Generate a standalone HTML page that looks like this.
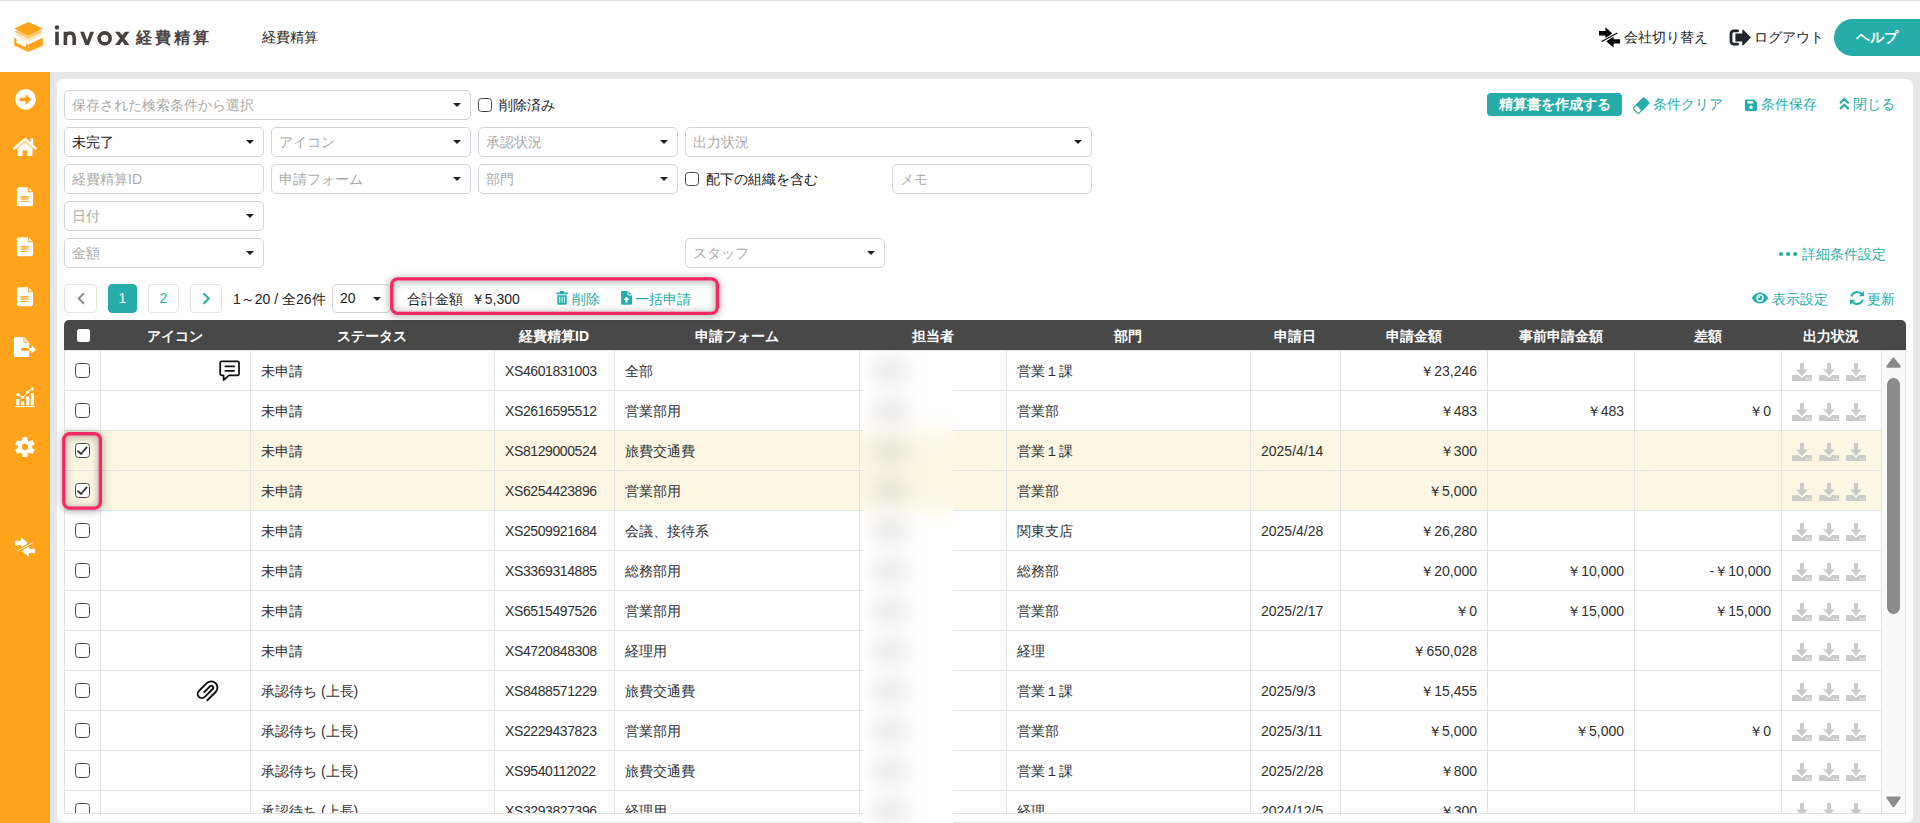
<!DOCTYPE html>
<html lang="ja">
<head>
<meta charset="utf-8">
<title>invox 経費精算</title>
<style>
*{box-sizing:border-box;margin:0;padding:0}
html,body{width:1920px;height:823px;overflow:hidden}
body{font-family:"Liberation Sans",sans-serif;font-size:14px;color:#222;background:#e8e8e8;position:relative}
.abs{position:absolute}
/* header */
#hdr{position:absolute;left:0;top:0;width:1920px;height:72px;background:#fff;border-top:1px solid #dfe1de}
#hdr .t{position:absolute;white-space:nowrap;color:#222;font-size:14px;line-height:20px}
#logo-jp{position:absolute;left:136px;top:25px;font-size:16px;font-weight:bold;letter-spacing:3px;color:#4a4543;line-height:24px;white-space:nowrap}
#help{position:absolute;left:1834px;top:18px;width:110px;height:37px;border-radius:18.5px;background:#26ada9;color:#fff;font-weight:bold;font-size:14px;line-height:37px;padding-left:22px}
/* sidebar */
#side{position:absolute;left:0;top:72px;width:50px;height:751px;background:#ffa31a}
#side svg{position:absolute}
/* panel */
#panel{position:absolute;left:57px;top:79px;width:1856px;height:743px;background:#fff;border-radius:6px}
.fld{position:absolute;height:30px;border:1px solid #ced4da;border-radius:5px;background:#fff;font-size:14px;line-height:28px;padding-left:7px;color:#aaa;white-space:nowrap}
.fld.v{color:#222}
.fld.sel:after{content:"";position:absolute;right:9px;top:12px;border-left:4px solid transparent;border-right:4px solid transparent;border-top:4px solid #222}
.cb{display:inline-block;width:15px;height:15px;border:1px solid #484848;border-radius:3.5px;background:#fff;position:relative;vertical-align:middle}
.cba{position:absolute;width:14px;height:14px;border:1px solid #484848;border-radius:3.5px;background:#fff}
.cb svg{position:absolute;left:-1px;top:-1px}
.lbl{position:absolute;white-space:nowrap;font-size:14px;line-height:20px;color:#222}
.teal{color:#26ada9}
.pg{position:absolute;top:284px;height:29px;border:1px solid #e4e4e4;border-radius:4px;background:#fff;text-align:center;line-height:27px;font-size:14px;color:#26ada9}
.pg.on{background:#26ada9;border-color:#26ada9;color:#fff}
/* table */
#thead{position:absolute;left:64px;top:320px;width:1842px;height:30px;background:#484848;border-radius:5px 5px 0 0}
#thead .th{position:absolute;top:0;height:30px;line-height:32px;text-align:center;color:#fff;font-weight:bold;font-size:14px;white-space:nowrap}
#tbody{position:absolute;left:0;top:0;width:1920px;height:814px;overflow:hidden}
.tr{position:absolute;left:64px;width:1818px;height:40px;border-bottom:1px solid #e3e3e3;border-left:1px solid #e3e3e3}
.tr.hl{background:#fdf6e3}
.td{position:absolute;top:0;height:39px;line-height:41px;border-right:1px solid #e3e3e3;padding:0 10px;white-space:nowrap;font-size:14px;color:#303030;overflow:hidden}
.td.r{text-align:right}
.c0{left:0;width:36px;padding:0;text-align:center;line-height:39px}
.c0 .cb{top:-1px}
.c3{letter-spacing:-.4px}
.c1{left:36px;width:150px}
.c2{left:186px;width:244px}
.c3{left:430px;width:120px}
.c4{left:550px;width:245px}
.c5{left:795px;width:147px}
.c6{left:942px;width:244px}
.c7{left:1186px;width:90px}
.c8{left:1276px;width:147px}
.c9{left:1423px;width:147px}
.c10{left:1570px;width:147px}
.c11{left:1717px;width:100px;padding:0}
.dl{fill:#cbcbcb;position:absolute;top:12px}
.dl:nth-child(1){left:10px}.dl:nth-child(2){left:37px}.dl:nth-child(3){left:64px}
.ic-comment{position:absolute;left:117px;top:10px}
.ic-clip{position:absolute;left:94px;top:8px}
#sb{position:absolute;left:1882px;top:350px;width:24px;height:464px;background:#fafafa;border-right:1px solid #e3e3e3;border-bottom:1px solid #e3e3e3}
#sb .thumb{position:absolute;left:5px;top:28px;width:13px;height:236px;border-radius:6.5px;background:#8b8b8b}
#sb .up{position:absolute;left:5px;top:8px;border-left:7px solid transparent;border-right:7px solid transparent;border-bottom:9px solid #8a8a8a}
#sb .dn{position:absolute;left:5px;top:446px;border-left:7px solid transparent;border-right:7px solid transparent;border-top:9px solid #8a8a8a}
.pink{position:absolute;border:3px solid #f5306f;border-radius:7px;filter:drop-shadow(0 2px 3px rgba(0,0,0,.45))}
#blur{position:absolute;left:863px;top:351px;width:90px;height:472px;overflow:hidden;background:#fff;z-index:5}
#blur .in{position:absolute;left:-30px;top:-30px;width:150px;height:532px;background:#fff;filter:blur(11px)}
#blur .in b{position:absolute;left:0;width:150px;display:block}
#blur .in i{position:absolute;left:42px;width:30px;height:10px;background:#c2c2c2;display:block;border-radius:3px}
</style>
</head>
<body>
<div id="hdr">
  
  <div id="logo-jp">経費精算</div>
  <div class="t" style="left:262px;top:26px">経費精算</div>
  <div class="t" style="left:1624px;top:26px">会社切り替え</div>
  <div class="t" style="left:1754px;top:26px">ログアウト</div>
  <div id="help">ヘルプ</div>
</div>
<div id="side">
  
</div>
<div id="panel"></div>
<div class="abs" style="left:50px;top:72px;width:1px;height:751px;background:#e4ebf3"></div>

<!-- filters -->
<div class="fld sel" style="left:64px;top:90px;width:407px">保存された検索条件から選択</div>
<span class="cba" style="left:478px;top:98px"></span><div class="lbl" style="left:499px;top:95px">削除済み</div>

<div class="fld sel v" style="left:64px;top:127px;width:200px">未完了</div>
<div class="fld sel" style="left:271px;top:127px;width:200px">アイコン</div>
<div class="fld sel" style="left:478px;top:127px;width:200px">承認状況</div>
<div class="fld sel" style="left:685px;top:127px;width:407px">出力状況</div>

<div class="fld" style="left:64px;top:164px;width:200px">経費精算ID</div>
<div class="fld sel" style="left:271px;top:164px;width:200px">申請フォーム</div>
<div class="fld sel" style="left:478px;top:164px;width:200px">部門</div>
<span class="cba" style="left:685px;top:172px"></span><div class="lbl" style="left:706px;top:169px">配下の組織を含む</div>
<div class="fld" style="left:892px;top:164px;width:200px">メモ</div>

<div class="fld sel" style="left:64px;top:201px;width:200px">日付</div>
<div class="fld sel" style="left:64px;top:238px;width:200px">金額</div>
<div class="fld sel" style="left:685px;top:238px;width:200px">スタッフ</div>

<!-- top-right actions -->
<div class="abs" style="left:1487px;top:93px;width:135px;height:23px;border-radius:4px;background:#26ada9;color:#fff;font-weight:bold;font-size:14px;line-height:23px;text-align:center;white-space:nowrap">精算書を作成する</div>
<div class="lbl teal" style="left:1653px;top:94px">条件クリア</div>
<div class="lbl teal" style="left:1761px;top:94px">条件保存</div>
<div class="lbl teal" style="left:1853px;top:94px">閉じる</div>
<div class="lbl teal" style="left:1802px;top:244px">詳細条件設定</div>
<div class="lbl teal" style="left:1772px;top:289px">表示設定</div>
<div class="lbl teal" style="left:1867px;top:289px">更新</div>

<!-- pagination -->
<div class="pg" style="left:64px;width:33px"></div>
<div class="pg on" style="left:108px;width:29px">1</div>
<div class="pg" style="left:148px;width:31px">2</div>
<div class="pg" style="left:190px;width:32px"></div>
<div class="lbl" style="left:233px;top:289px">1～20 / 全26件</div>
<div class="fld sel v" style="left:332px;top:284px;width:59px;height:29px;line-height:27px">20</div>
<div class="lbl" style="left:407px;top:289px">合計金額&nbsp;&nbsp;￥5,300</div>
<div class="lbl teal" style="left:572px;top:289px">削除</div>
<div class="lbl teal" style="left:635px;top:289px">一括申請</div>

<!-- table -->
<div id="thead">
  <span class="abs" style="left:13px;top:9px;width:13px;height:13px;background:#fff;border-radius:2.5px"></span>
  <div class="th" style="left:36px;width:150px">アイコン</div>
  <div class="th" style="left:186px;width:244px">ステータス</div>
  <div class="th" style="left:430px;width:120px">経費精算ID</div>
  <div class="th" style="left:550px;width:245px">申請フォーム</div>
  <div class="th" style="left:795px;width:147px">担当者</div>
  <div class="th" style="left:942px;width:244px">部門</div>
  <div class="th" style="left:1186px;width:90px">申請日</div>
  <div class="th" style="left:1276px;width:147px">申請金額</div>
  <div class="th" style="left:1423px;width:147px">事前申請金額</div>
  <div class="th" style="left:1570px;width:147px">差額</div>
  <div class="th" style="left:1717px;width:100px">出力状況</div>
</div>
<div id="tbody">
<div class="tr" style="top:351px">
<div class="td c0"><span class="cb"></span></div><div class="td c1"></div><div class="td c2">未申請</div><div class="td c3">XS4601831003</div><div class="td c4">全部</div><div class="td c5"></div><div class="td c6">営業１課</div><div class="td c7"></div><div class="td c8 r">￥23,246</div><div class="td c9 r"></div><div class="td c10 r"></div><div class="td c11"><svg class="dl" viewBox="0 0 20 18" width="20" height="18"><path d="M8 0h4v6.400h3.900L10 13.100 4.100 6.400H8z"/><path d="M1 12h5.600l3.400 3 3.400-3H19a1 1 0 0 1 1 1v4a1 1 0 0 1-1 1H1a1 1 0 0 1-1-1v-4a1 1 0 0 1 1-1z M14.200 15.300v1.500h1.300v-1.500z M17.200 15.300v1.500h1.300v-1.500z" fill-rule="evenodd"/></svg><svg class="dl" viewBox="0 0 20 18" width="20" height="18"><path d="M8 0h4v6.400h3.900L10 13.100 4.100 6.400H8z"/><path d="M1 12h5.600l3.400 3 3.400-3H19a1 1 0 0 1 1 1v4a1 1 0 0 1-1 1H1a1 1 0 0 1-1-1v-4a1 1 0 0 1 1-1z M14.200 15.300v1.500h1.300v-1.500z M17.200 15.300v1.500h1.300v-1.500z" fill-rule="evenodd"/></svg><svg class="dl" viewBox="0 0 20 18" width="20" height="18"><path d="M8 0h4v6.400h3.900L10 13.100 4.100 6.400H8z"/><path d="M1 12h5.600l3.400 3 3.400-3H19a1 1 0 0 1 1 1v4a1 1 0 0 1-1 1H1a1 1 0 0 1-1-1v-4a1 1 0 0 1 1-1z M14.200 15.300v1.500h1.300v-1.500z M17.200 15.300v1.500h1.300v-1.500z" fill-rule="evenodd"/></svg></div>
</div>
<div class="tr" style="top:391px">
<div class="td c0"><span class="cb"></span></div><div class="td c1"></div><div class="td c2">未申請</div><div class="td c3">XS2616595512</div><div class="td c4">営業部用</div><div class="td c5"></div><div class="td c6">営業部</div><div class="td c7"></div><div class="td c8 r">￥483</div><div class="td c9 r">￥483</div><div class="td c10 r">￥0</div><div class="td c11"><svg class="dl" viewBox="0 0 20 18" width="20" height="18"><path d="M8 0h4v6.400h3.900L10 13.100 4.100 6.400H8z"/><path d="M1 12h5.600l3.400 3 3.400-3H19a1 1 0 0 1 1 1v4a1 1 0 0 1-1 1H1a1 1 0 0 1-1-1v-4a1 1 0 0 1 1-1z M14.200 15.300v1.500h1.300v-1.500z M17.200 15.300v1.500h1.300v-1.500z" fill-rule="evenodd"/></svg><svg class="dl" viewBox="0 0 20 18" width="20" height="18"><path d="M8 0h4v6.400h3.900L10 13.100 4.100 6.400H8z"/><path d="M1 12h5.600l3.400 3 3.400-3H19a1 1 0 0 1 1 1v4a1 1 0 0 1-1 1H1a1 1 0 0 1-1-1v-4a1 1 0 0 1 1-1z M14.200 15.300v1.500h1.300v-1.500z M17.200 15.300v1.500h1.300v-1.500z" fill-rule="evenodd"/></svg><svg class="dl" viewBox="0 0 20 18" width="20" height="18"><path d="M8 0h4v6.400h3.900L10 13.100 4.100 6.400H8z"/><path d="M1 12h5.600l3.400 3 3.400-3H19a1 1 0 0 1 1 1v4a1 1 0 0 1-1 1H1a1 1 0 0 1-1-1v-4a1 1 0 0 1 1-1z M14.200 15.300v1.500h1.300v-1.500z M17.200 15.300v1.500h1.300v-1.500z" fill-rule="evenodd"/></svg></div>
</div>
<div class="tr hl" style="top:431px">
<div class="td c0"><span class="cb on"><svg viewBox="0 0 15 15" width="15" height="15"><path d="M2.4 7.7L6 11L12.1 3.9" fill="none" stroke="#333" stroke-width="1.8"/></svg></span></div><div class="td c1"></div><div class="td c2">未申請</div><div class="td c3">XS8129000524</div><div class="td c4">旅費交通費</div><div class="td c5"></div><div class="td c6">営業１課</div><div class="td c7">2025/4/14</div><div class="td c8 r">￥300</div><div class="td c9 r"></div><div class="td c10 r"></div><div class="td c11"><svg class="dl" viewBox="0 0 20 18" width="20" height="18"><path d="M8 0h4v6.400h3.900L10 13.100 4.100 6.400H8z"/><path d="M1 12h5.600l3.400 3 3.400-3H19a1 1 0 0 1 1 1v4a1 1 0 0 1-1 1H1a1 1 0 0 1-1-1v-4a1 1 0 0 1 1-1z M14.200 15.300v1.500h1.300v-1.500z M17.200 15.300v1.500h1.300v-1.500z" fill-rule="evenodd"/></svg><svg class="dl" viewBox="0 0 20 18" width="20" height="18"><path d="M8 0h4v6.400h3.900L10 13.100 4.100 6.400H8z"/><path d="M1 12h5.600l3.400 3 3.400-3H19a1 1 0 0 1 1 1v4a1 1 0 0 1-1 1H1a1 1 0 0 1-1-1v-4a1 1 0 0 1 1-1z M14.200 15.300v1.500h1.300v-1.500z M17.200 15.300v1.500h1.300v-1.500z" fill-rule="evenodd"/></svg><svg class="dl" viewBox="0 0 20 18" width="20" height="18"><path d="M8 0h4v6.400h3.900L10 13.100 4.100 6.400H8z"/><path d="M1 12h5.600l3.400 3 3.400-3H19a1 1 0 0 1 1 1v4a1 1 0 0 1-1 1H1a1 1 0 0 1-1-1v-4a1 1 0 0 1 1-1z M14.200 15.300v1.500h1.300v-1.500z M17.200 15.300v1.500h1.300v-1.500z" fill-rule="evenodd"/></svg></div>
</div>
<div class="tr hl" style="top:471px">
<div class="td c0"><span class="cb on"><svg viewBox="0 0 15 15" width="15" height="15"><path d="M2.4 7.7L6 11L12.1 3.9" fill="none" stroke="#333" stroke-width="1.8"/></svg></span></div><div class="td c1"></div><div class="td c2">未申請</div><div class="td c3">XS6254423896</div><div class="td c4">営業部用</div><div class="td c5"></div><div class="td c6">営業部</div><div class="td c7"></div><div class="td c8 r">￥5,000</div><div class="td c9 r"></div><div class="td c10 r"></div><div class="td c11"><svg class="dl" viewBox="0 0 20 18" width="20" height="18"><path d="M8 0h4v6.400h3.900L10 13.100 4.100 6.400H8z"/><path d="M1 12h5.600l3.400 3 3.400-3H19a1 1 0 0 1 1 1v4a1 1 0 0 1-1 1H1a1 1 0 0 1-1-1v-4a1 1 0 0 1 1-1z M14.200 15.300v1.500h1.300v-1.500z M17.200 15.300v1.500h1.300v-1.500z" fill-rule="evenodd"/></svg><svg class="dl" viewBox="0 0 20 18" width="20" height="18"><path d="M8 0h4v6.400h3.900L10 13.100 4.100 6.400H8z"/><path d="M1 12h5.600l3.400 3 3.400-3H19a1 1 0 0 1 1 1v4a1 1 0 0 1-1 1H1a1 1 0 0 1-1-1v-4a1 1 0 0 1 1-1z M14.200 15.300v1.500h1.300v-1.500z M17.200 15.300v1.500h1.300v-1.500z" fill-rule="evenodd"/></svg><svg class="dl" viewBox="0 0 20 18" width="20" height="18"><path d="M8 0h4v6.400h3.900L10 13.100 4.100 6.400H8z"/><path d="M1 12h5.600l3.400 3 3.400-3H19a1 1 0 0 1 1 1v4a1 1 0 0 1-1 1H1a1 1 0 0 1-1-1v-4a1 1 0 0 1 1-1z M14.200 15.300v1.500h1.300v-1.500z M17.200 15.300v1.500h1.300v-1.500z" fill-rule="evenodd"/></svg></div>
</div>
<div class="tr" style="top:511px">
<div class="td c0"><span class="cb"></span></div><div class="td c1"></div><div class="td c2">未申請</div><div class="td c3">XS2509921684</div><div class="td c4">会議、接待系</div><div class="td c5"></div><div class="td c6">関東支店</div><div class="td c7">2025/4/28</div><div class="td c8 r">￥26,280</div><div class="td c9 r"></div><div class="td c10 r"></div><div class="td c11"><svg class="dl" viewBox="0 0 20 18" width="20" height="18"><path d="M8 0h4v6.400h3.900L10 13.100 4.100 6.400H8z"/><path d="M1 12h5.600l3.400 3 3.400-3H19a1 1 0 0 1 1 1v4a1 1 0 0 1-1 1H1a1 1 0 0 1-1-1v-4a1 1 0 0 1 1-1z M14.200 15.300v1.500h1.300v-1.500z M17.200 15.300v1.500h1.300v-1.500z" fill-rule="evenodd"/></svg><svg class="dl" viewBox="0 0 20 18" width="20" height="18"><path d="M8 0h4v6.400h3.900L10 13.100 4.100 6.400H8z"/><path d="M1 12h5.600l3.400 3 3.400-3H19a1 1 0 0 1 1 1v4a1 1 0 0 1-1 1H1a1 1 0 0 1-1-1v-4a1 1 0 0 1 1-1z M14.200 15.300v1.500h1.300v-1.500z M17.200 15.300v1.500h1.300v-1.500z" fill-rule="evenodd"/></svg><svg class="dl" viewBox="0 0 20 18" width="20" height="18"><path d="M8 0h4v6.400h3.900L10 13.100 4.100 6.400H8z"/><path d="M1 12h5.600l3.400 3 3.400-3H19a1 1 0 0 1 1 1v4a1 1 0 0 1-1 1H1a1 1 0 0 1-1-1v-4a1 1 0 0 1 1-1z M14.200 15.300v1.500h1.300v-1.500z M17.200 15.300v1.500h1.300v-1.500z" fill-rule="evenodd"/></svg></div>
</div>
<div class="tr" style="top:551px">
<div class="td c0"><span class="cb"></span></div><div class="td c1"></div><div class="td c2">未申請</div><div class="td c3">XS3369314885</div><div class="td c4">総務部用</div><div class="td c5"></div><div class="td c6">総務部</div><div class="td c7"></div><div class="td c8 r">￥20,000</div><div class="td c9 r">￥10,000</div><div class="td c10 r">-￥10,000</div><div class="td c11"><svg class="dl" viewBox="0 0 20 18" width="20" height="18"><path d="M8 0h4v6.400h3.900L10 13.100 4.100 6.400H8z"/><path d="M1 12h5.600l3.400 3 3.400-3H19a1 1 0 0 1 1 1v4a1 1 0 0 1-1 1H1a1 1 0 0 1-1-1v-4a1 1 0 0 1 1-1z M14.200 15.300v1.500h1.300v-1.500z M17.200 15.300v1.500h1.300v-1.500z" fill-rule="evenodd"/></svg><svg class="dl" viewBox="0 0 20 18" width="20" height="18"><path d="M8 0h4v6.400h3.900L10 13.100 4.100 6.400H8z"/><path d="M1 12h5.600l3.400 3 3.400-3H19a1 1 0 0 1 1 1v4a1 1 0 0 1-1 1H1a1 1 0 0 1-1-1v-4a1 1 0 0 1 1-1z M14.200 15.300v1.500h1.300v-1.500z M17.200 15.300v1.500h1.300v-1.500z" fill-rule="evenodd"/></svg><svg class="dl" viewBox="0 0 20 18" width="20" height="18"><path d="M8 0h4v6.400h3.900L10 13.100 4.100 6.400H8z"/><path d="M1 12h5.600l3.400 3 3.400-3H19a1 1 0 0 1 1 1v4a1 1 0 0 1-1 1H1a1 1 0 0 1-1-1v-4a1 1 0 0 1 1-1z M14.200 15.300v1.500h1.300v-1.500z M17.200 15.300v1.500h1.300v-1.500z" fill-rule="evenodd"/></svg></div>
</div>
<div class="tr" style="top:591px">
<div class="td c0"><span class="cb"></span></div><div class="td c1"></div><div class="td c2">未申請</div><div class="td c3">XS6515497526</div><div class="td c4">営業部用</div><div class="td c5"></div><div class="td c6">営業部</div><div class="td c7">2025/2/17</div><div class="td c8 r">￥0</div><div class="td c9 r">￥15,000</div><div class="td c10 r">￥15,000</div><div class="td c11"><svg class="dl" viewBox="0 0 20 18" width="20" height="18"><path d="M8 0h4v6.400h3.900L10 13.100 4.100 6.400H8z"/><path d="M1 12h5.600l3.400 3 3.400-3H19a1 1 0 0 1 1 1v4a1 1 0 0 1-1 1H1a1 1 0 0 1-1-1v-4a1 1 0 0 1 1-1z M14.200 15.300v1.500h1.300v-1.500z M17.200 15.300v1.500h1.300v-1.500z" fill-rule="evenodd"/></svg><svg class="dl" viewBox="0 0 20 18" width="20" height="18"><path d="M8 0h4v6.400h3.900L10 13.100 4.100 6.400H8z"/><path d="M1 12h5.600l3.400 3 3.400-3H19a1 1 0 0 1 1 1v4a1 1 0 0 1-1 1H1a1 1 0 0 1-1-1v-4a1 1 0 0 1 1-1z M14.200 15.300v1.500h1.300v-1.500z M17.200 15.300v1.500h1.300v-1.500z" fill-rule="evenodd"/></svg><svg class="dl" viewBox="0 0 20 18" width="20" height="18"><path d="M8 0h4v6.400h3.900L10 13.100 4.100 6.400H8z"/><path d="M1 12h5.600l3.400 3 3.400-3H19a1 1 0 0 1 1 1v4a1 1 0 0 1-1 1H1a1 1 0 0 1-1-1v-4a1 1 0 0 1 1-1z M14.200 15.300v1.500h1.300v-1.500z M17.200 15.300v1.500h1.300v-1.500z" fill-rule="evenodd"/></svg></div>
</div>
<div class="tr" style="top:631px">
<div class="td c0"><span class="cb"></span></div><div class="td c1"></div><div class="td c2">未申請</div><div class="td c3">XS4720848308</div><div class="td c4">経理用</div><div class="td c5"></div><div class="td c6">経理</div><div class="td c7"></div><div class="td c8 r">￥650,028</div><div class="td c9 r"></div><div class="td c10 r"></div><div class="td c11"><svg class="dl" viewBox="0 0 20 18" width="20" height="18"><path d="M8 0h4v6.400h3.900L10 13.100 4.100 6.400H8z"/><path d="M1 12h5.600l3.400 3 3.400-3H19a1 1 0 0 1 1 1v4a1 1 0 0 1-1 1H1a1 1 0 0 1-1-1v-4a1 1 0 0 1 1-1z M14.200 15.300v1.500h1.300v-1.500z M17.200 15.300v1.500h1.300v-1.500z" fill-rule="evenodd"/></svg><svg class="dl" viewBox="0 0 20 18" width="20" height="18"><path d="M8 0h4v6.400h3.900L10 13.100 4.100 6.400H8z"/><path d="M1 12h5.600l3.400 3 3.400-3H19a1 1 0 0 1 1 1v4a1 1 0 0 1-1 1H1a1 1 0 0 1-1-1v-4a1 1 0 0 1 1-1z M14.200 15.300v1.500h1.300v-1.500z M17.200 15.300v1.500h1.300v-1.500z" fill-rule="evenodd"/></svg><svg class="dl" viewBox="0 0 20 18" width="20" height="18"><path d="M8 0h4v6.400h3.900L10 13.100 4.100 6.400H8z"/><path d="M1 12h5.600l3.400 3 3.400-3H19a1 1 0 0 1 1 1v4a1 1 0 0 1-1 1H1a1 1 0 0 1-1-1v-4a1 1 0 0 1 1-1z M14.200 15.300v1.500h1.300v-1.500z M17.200 15.300v1.500h1.300v-1.500z" fill-rule="evenodd"/></svg></div>
</div>
<div class="tr" style="top:671px">
<div class="td c0"><span class="cb"></span></div><div class="td c1"></div><div class="td c2">承認待ち (上長)</div><div class="td c3">XS8488571229</div><div class="td c4">旅費交通費</div><div class="td c5"></div><div class="td c6">営業１課</div><div class="td c7">2025/9/3</div><div class="td c8 r">￥15,455</div><div class="td c9 r"></div><div class="td c10 r"></div><div class="td c11"><svg class="dl" viewBox="0 0 20 18" width="20" height="18"><path d="M8 0h4v6.400h3.900L10 13.100 4.100 6.400H8z"/><path d="M1 12h5.600l3.400 3 3.400-3H19a1 1 0 0 1 1 1v4a1 1 0 0 1-1 1H1a1 1 0 0 1-1-1v-4a1 1 0 0 1 1-1z M14.200 15.300v1.500h1.300v-1.500z M17.200 15.300v1.500h1.300v-1.500z" fill-rule="evenodd"/></svg><svg class="dl" viewBox="0 0 20 18" width="20" height="18"><path d="M8 0h4v6.400h3.900L10 13.100 4.100 6.400H8z"/><path d="M1 12h5.600l3.400 3 3.400-3H19a1 1 0 0 1 1 1v4a1 1 0 0 1-1 1H1a1 1 0 0 1-1-1v-4a1 1 0 0 1 1-1z M14.200 15.300v1.500h1.300v-1.500z M17.200 15.300v1.500h1.300v-1.500z" fill-rule="evenodd"/></svg><svg class="dl" viewBox="0 0 20 18" width="20" height="18"><path d="M8 0h4v6.400h3.900L10 13.100 4.100 6.400H8z"/><path d="M1 12h5.600l3.400 3 3.400-3H19a1 1 0 0 1 1 1v4a1 1 0 0 1-1 1H1a1 1 0 0 1-1-1v-4a1 1 0 0 1 1-1z M14.200 15.300v1.500h1.300v-1.500z M17.200 15.300v1.500h1.300v-1.500z" fill-rule="evenodd"/></svg></div>
</div>
<div class="tr" style="top:711px">
<div class="td c0"><span class="cb"></span></div><div class="td c1"></div><div class="td c2">承認待ち (上長)</div><div class="td c3">XS2229437823</div><div class="td c4">営業部用</div><div class="td c5"></div><div class="td c6">営業部</div><div class="td c7">2025/3/11</div><div class="td c8 r">￥5,000</div><div class="td c9 r">￥5,000</div><div class="td c10 r">￥0</div><div class="td c11"><svg class="dl" viewBox="0 0 20 18" width="20" height="18"><path d="M8 0h4v6.400h3.900L10 13.100 4.100 6.400H8z"/><path d="M1 12h5.600l3.400 3 3.400-3H19a1 1 0 0 1 1 1v4a1 1 0 0 1-1 1H1a1 1 0 0 1-1-1v-4a1 1 0 0 1 1-1z M14.200 15.300v1.500h1.300v-1.500z M17.200 15.300v1.500h1.300v-1.500z" fill-rule="evenodd"/></svg><svg class="dl" viewBox="0 0 20 18" width="20" height="18"><path d="M8 0h4v6.400h3.900L10 13.100 4.100 6.400H8z"/><path d="M1 12h5.600l3.400 3 3.400-3H19a1 1 0 0 1 1 1v4a1 1 0 0 1-1 1H1a1 1 0 0 1-1-1v-4a1 1 0 0 1 1-1z M14.200 15.300v1.500h1.300v-1.500z M17.200 15.300v1.500h1.300v-1.500z" fill-rule="evenodd"/></svg><svg class="dl" viewBox="0 0 20 18" width="20" height="18"><path d="M8 0h4v6.400h3.900L10 13.100 4.100 6.400H8z"/><path d="M1 12h5.600l3.400 3 3.400-3H19a1 1 0 0 1 1 1v4a1 1 0 0 1-1 1H1a1 1 0 0 1-1-1v-4a1 1 0 0 1 1-1z M14.200 15.300v1.500h1.300v-1.500z M17.200 15.300v1.500h1.300v-1.500z" fill-rule="evenodd"/></svg></div>
</div>
<div class="tr" style="top:751px">
<div class="td c0"><span class="cb"></span></div><div class="td c1"></div><div class="td c2">承認待ち (上長)</div><div class="td c3">XS9540112022</div><div class="td c4">旅費交通費</div><div class="td c5"></div><div class="td c6">営業１課</div><div class="td c7">2025/2/28</div><div class="td c8 r">￥800</div><div class="td c9 r"></div><div class="td c10 r"></div><div class="td c11"><svg class="dl" viewBox="0 0 20 18" width="20" height="18"><path d="M8 0h4v6.400h3.900L10 13.100 4.100 6.400H8z"/><path d="M1 12h5.600l3.400 3 3.400-3H19a1 1 0 0 1 1 1v4a1 1 0 0 1-1 1H1a1 1 0 0 1-1-1v-4a1 1 0 0 1 1-1z M14.200 15.300v1.500h1.300v-1.500z M17.200 15.300v1.500h1.300v-1.500z" fill-rule="evenodd"/></svg><svg class="dl" viewBox="0 0 20 18" width="20" height="18"><path d="M8 0h4v6.400h3.900L10 13.100 4.100 6.400H8z"/><path d="M1 12h5.600l3.400 3 3.400-3H19a1 1 0 0 1 1 1v4a1 1 0 0 1-1 1H1a1 1 0 0 1-1-1v-4a1 1 0 0 1 1-1z M14.200 15.300v1.500h1.300v-1.500z M17.200 15.300v1.500h1.300v-1.500z" fill-rule="evenodd"/></svg><svg class="dl" viewBox="0 0 20 18" width="20" height="18"><path d="M8 0h4v6.400h3.900L10 13.100 4.100 6.400H8z"/><path d="M1 12h5.600l3.400 3 3.400-3H19a1 1 0 0 1 1 1v4a1 1 0 0 1-1 1H1a1 1 0 0 1-1-1v-4a1 1 0 0 1 1-1z M14.200 15.300v1.500h1.300v-1.500z M17.200 15.300v1.500h1.300v-1.500z" fill-rule="evenodd"/></svg></div>
</div>
<div class="tr" style="top:791px">
<div class="td c0"><span class="cb"></span></div><div class="td c1"></div><div class="td c2">承認待ち (上長)</div><div class="td c3">XS3293827396</div><div class="td c4">経理用</div><div class="td c5"></div><div class="td c6">経理</div><div class="td c7">2024/12/5</div><div class="td c8 r">￥300</div><div class="td c9 r"></div><div class="td c10 r"></div><div class="td c11"><svg class="dl" viewBox="0 0 20 18" width="20" height="18"><path d="M8 0h4v6.400h3.900L10 13.100 4.100 6.400H8z"/><path d="M1 12h5.600l3.400 3 3.400-3H19a1 1 0 0 1 1 1v4a1 1 0 0 1-1 1H1a1 1 0 0 1-1-1v-4a1 1 0 0 1 1-1z M14.200 15.300v1.500h1.300v-1.500z M17.200 15.300v1.500h1.300v-1.500z" fill-rule="evenodd"/></svg><svg class="dl" viewBox="0 0 20 18" width="20" height="18"><path d="M8 0h4v6.400h3.900L10 13.100 4.100 6.400H8z"/><path d="M1 12h5.600l3.400 3 3.400-3H19a1 1 0 0 1 1 1v4a1 1 0 0 1-1 1H1a1 1 0 0 1-1-1v-4a1 1 0 0 1 1-1z M14.200 15.300v1.500h1.300v-1.500z M17.200 15.300v1.500h1.300v-1.500z" fill-rule="evenodd"/></svg><svg class="dl" viewBox="0 0 20 18" width="20" height="18"><path d="M8 0h4v6.400h3.900L10 13.100 4.100 6.400H8z"/><path d="M1 12h5.600l3.400 3 3.400-3H19a1 1 0 0 1 1 1v4a1 1 0 0 1-1 1H1a1 1 0 0 1-1-1v-4a1 1 0 0 1 1-1z M14.200 15.300v1.500h1.300v-1.500z M17.200 15.300v1.500h1.300v-1.500z" fill-rule="evenodd"/></svg></div>
</div>
</div>
<div id="sb"><div class="thumb"></div></div>
<div id="blur"><div class="in"><b style="top:110px;height:80px;background:#fdf6e3"></b><i style="top:45px"></i><i style="top:85px"></i><i style="top:125px"></i><i style="top:165px"></i><i style="top:205px"></i><i style="top:245px"></i><i style="top:285px"></i><i style="top:325px"></i><i style="top:365px"></i><i style="top:405px"></i><i style="top:445px"></i><i style="top:485px"></i></div></div>
<div class="abs" style="left:64px;top:813px;width:1842px;height:1px;background:#e3e3e3"></div>
<div class="abs" style="left:64px;top:350px;width:1842px;height:1px;background:#e3e3e3"></div>

<svg class="abs" style="left:0;top:0;pointer-events:none" width="1920" height="823" viewBox="0 0 1920 823">
<!-- logo mark -->
<g>
<polygon points="14.2,34.6 28.3,28 42.9,34.6 28.3,41.4" fill="#ffe6c2"/>
<polygon points="14.2,31.7 28.3,25 42.9,31.7 28.3,38.7" fill="#ffc978"/>
<polygon points="14.2,28.5 28.3,22 42.9,28.5 28.3,35.6" fill="#ffa31a"/>
<polygon points="42.9,37.7 28.3,44.4 28.3,51.9 42.9,45.5" fill="#ffa31a"/>
<path d="M14.2 37.7 L16.4 38.8 V42.7 L25.9 47.2 V43.3 L28.3 44.4 V51.9 L14.2 45.5z" fill="#ffa31a"/>
</g>
<!-- invox wordmark -->
<g fill="none" stroke="#453f3d" stroke-width="3.6">
<circle cx="57" cy="27.5" r="2.2" fill="#453f3d" stroke="none"/>
<path d="M57 31.7V45.1"/>
<path d="M65.4 31.7V45.1M65.4 38.2c0-3.4 1.9-5.2 4.5-5.2s4.3 1.7 4.3 5.2V45.1"/>
<polygon points="80.100,31.700 84,31.700 87.100,40.200 90.200,31.700 94,31.700 88.900,45.100 85.300,45.100" fill="#453f3d" stroke="none"/>
<circle cx="104.65" cy="38.4" r="5.5"/>
<polygon points="115.06,31.7 119.53,31.7 129.44,45.1 124.97,45.1" fill="#453f3d" stroke="none"/><polygon points="124.97,31.7 129.44,31.7 119.53,45.1 115.06,45.1" fill="#453f3d" stroke="none"/>
</g>
<!-- header: switch icon (black) -->
<g transform="translate(1599,27.2)">
<path d="M0 3.9h6.4V0l6.8 6.1-6.8 5.9V8.3H0z" fill="#000"/>
<path d="M21 12h-6.4V8.5L7.4 14.4l7.2 5.9v-3.9H21z" fill="#000"/>
<path d="M1.200 15.050L19.800 5.150" stroke="#fff" stroke-width="3.100"/>
<path d="M2.6 14.3L18.4 5.9" stroke="#000" stroke-width="1.1"/>
</g>
<!-- header: logout icon -->
<g transform="translate(1729.6,29.5)">
<path d="M8 1.4H4.2a2.8 2.8 0 0 0-2.8 2.8v7.6a2.8 2.8 0 0 0 2.8 2.8H8" fill="none" stroke="#212529" stroke-width="2.8" stroke-linecap="round"/>
<path d="M5.800 4h6.900V.6c0-.6.600-.800 1-.400l7.200 7.200c.300.300.300.900 0 1.200l-7.200 7.200c-.400.400-1 .200-1-.400V12H5.800z" fill="#212529"/>
</g>
<!-- sidebar icons (white on orange) -->
<g fill="#fff">
<!-- arrow circle -->
<circle cx="25.5" cy="99.4" r="10.4"/>
<path d="M20 97.800h5.600V94.400l5.700 5-5.700 5.300v-3.500H20z" fill="#ffa31a"/>
<!-- home -->
<path d="M14.600 148.300L25 139.200l10.400 9.100" fill="none" stroke="#fff" stroke-width="2.600" stroke-linecap="round" stroke-linejoin="round"/>
<rect x="30.400" y="138.300" width="2.700" height="6"/>
<path d="M17.500 148.600L25 142.100l7.500 6.500V155a1 1 0 0 1-1 1H27.400V150.600H22.600V156H18.500a1 1 0 0 1-1-1z"/>
<!-- doc x3 -->
<g><path d="M18.9 187.2h9.6l4.5 4.5v12.6a2 2 0 0 1-2 2H18.9a2 2 0 0 1-2-2v-15.1a2 2 0 0 1 2-2z"/>
<path d="M28.4 187.2v4.6h4.6" fill="none" stroke="#ffa31a" stroke-width="1"/>
<rect x="20.6" y="196.7" width="8" height="2.4" fill="#ffd08a"/>
<path d="M20.4 196.65h8.7M20.4 199.1h7.800M20.4 201.4h8.7" fill="none" stroke="#ffa31a" stroke-width=".9"/>
</g>
<g transform="translate(0,50)"><path d="M18.9 187.2h9.6l4.5 4.5v12.6a2 2 0 0 1-2 2H18.9a2 2 0 0 1-2-2v-15.1a2 2 0 0 1 2-2z"/>
<path d="M28.4 187.2v4.6h4.6" fill="none" stroke="#ffa31a" stroke-width="1"/>
<rect x="20.6" y="196.7" width="8" height="2.4" fill="#ffd08a"/>
<path d="M20.4 196.65h8.7M20.4 199.1h7.800M20.4 201.4h8.7" fill="none" stroke="#ffa31a" stroke-width=".9"/>
</g>
<g transform="translate(0,100)"><path d="M18.9 187.2h9.6l4.5 4.5v12.6a2 2 0 0 1-2 2H18.9a2 2 0 0 1-2-2v-15.1a2 2 0 0 1 2-2z"/>
<path d="M28.4 187.2v4.6h4.6" fill="none" stroke="#ffa31a" stroke-width="1"/>
<rect x="20.6" y="196.7" width="8" height="2.4" fill="#ffd08a"/>
<path d="M20.4 196.65h8.7M20.4 199.1h7.800M20.4 201.4h8.7" fill="none" stroke="#ffa31a" stroke-width=".9"/>
</g>
<!-- file export -->
<path d="M15.400 337h8.600l5.200 5.200V355.500a1.500 1.500 0 0 1-1.500 1.500H15.400a1.500 1.500 0 0 1-1.500-1.500v-17a1.500 1.500 0 0 1 1.500-1.500z"/>
<path d="M24 337v5.200h5.200" fill="none" stroke="#ffa31a" stroke-width="1"/>
<rect x="21" y="347.900" width="9" height="2.900" rx="1" fill="#ffa31a"/>
<path d="M24 337v5.200h5.200z" fill="#ffd699"/>
<path d="M29.200 348h2.200v-2.800l4.700 4.200-4.700 4.200v-2.800h-2.200z"/>
<!-- chart -->
<rect x="16.200" y="399" width="3.200" height="6.400"/>
<rect x="21" y="401.300" width="3.100" height="4.100"/>
<rect x="26.200" y="396.600" width="3.100" height="8.800"/>
<rect x="30.800" y="393" width="3.100" height="12.400"/>
<rect x="14.800" y="406.100" width="20.200" height="1"/>
<path d="M17.900 394.600l4.900 3.100 4.700-5.700 4.600-3.100" fill="none" stroke="#fff" stroke-width="1"/>
<circle cx="17.900" cy="394.600" r="1.600"/><circle cx="22.800" cy="397.700" r="1.600"/><circle cx="27.500" cy="392" r="1.600"/><circle cx="32.100" cy="388.900" r="1.600"/>
<!-- gear -->
<g transform="translate(24.950,446.900)">
<circle r="7.200"/>
<rect x="-2.600" y="-10" width="5.200" height="20" rx="1"/>
<g transform="rotate(60)"><rect x="-2.600" y="-10" width="5.200" height="20" rx="1"/></g><g transform="rotate(120)"><rect x="-2.600" y="-10" width="5.200" height="20" rx="1"/></g>
<circle r="3.100" fill="#ffa31a"/>
</g>
<!-- switch -->
<g transform="translate(14.800,537)">
<path d="M0 3.700h6.300V0l6.700 6-6.700 5.700V8.200H0z"/>
<path d="M20.300 11.800h-6.200V8.400L7.200 14.200l6.900 5.800v-3.900h6.200z"/>
<path d="M1 14.600L19.300 5.300" stroke="#ffa31a" stroke-width="3"/>
<path d="M2.400 13.900L17.900 6" stroke="#fff" stroke-width="1"/>
</g>
</g>
<!-- teal small icons -->
<g fill="#26ada9">
<!-- eraser -->
<g transform="translate(1641,105.700) rotate(-45)">
<rect x="-7.600" y="-3.800" width="15.200" height="7.600" rx="1.300" fill="#fff" stroke="#26ada9" stroke-width="1.200"/>
<path d="M-3 -4.400H6.300a1.900 1.900 0 0 1 1.900 1.900v5a1.900 1.900 0 0 1-1.900 1.900H-3z"/>
</g>
<!-- save -->
<path d="M1746.500 99.500h7.700l2.800 2.800v7.200a1.500 1.500 0 0 1-1.500 1.500h-9a1.500 1.500 0 0 1-1.500-1.500v-8.500a1.500 1.500 0 0 1 1.500-1.500z"/>
<rect x="1747.300" y="101.200" width="6" height="2.300" fill="#fff"/>
<circle cx="1751" cy="107.300" r="1.700" fill="#fff"/>
<!-- double chevron up -->
<path d="M1840 103.300l4.300-4.300 4.300 4.300M1840 109l4.300-4.300 4.300 4.300" fill="none" stroke="#26ada9" stroke-width="2.200"/>
<!-- dots -->
<circle cx="1781" cy="254" r="2.100"/><circle cx="1788.100" cy="254" r="2.100"/><circle cx="1795.200" cy="254" r="2.100"/>
<!-- eye -->
<path d="M1751.800 298c3.600-7.400 12.800-7.400 16.400 0-3.600 7.400-12.800 7.400-16.400 0z"/>
<circle cx="1760" cy="298" r="3.700" fill="#fff"/>
<circle cx="1760" cy="298" r="2.400"/>
<circle cx="1759" cy="297" r=".9" fill="#fff"/>
<!-- refresh -->
<g fill="none" stroke="#26ada9" stroke-width="2">
<path d="M1851.300 296.600a5.900 5.900 0 0 1 10.300-2.400"/>
<path d="M1862.700 299.400a5.900 5.900 0 0 1-10.300 2.400"/>
</g>
<path d="M1864 291v5.300h-5.300z"/>
<path d="M1850 305v-5.300h5.300z"/>
<!-- trash -->
<path d="M559.800 291h4.400v1.500h3.500v1.800h-11.400v-1.800h3.500z"/>
<path d="M557.300 295.300h9.400v8.200a1.300 1.300 0 0 1-1.300 1.300h-6.800a1.300 1.300 0 0 1-1.300-1.300z"/>
<path d="M559.700 296.800v6M562 296.800v6M564.300 296.800v6" stroke="#fff" stroke-width=".9"/>
<!-- file upload -->
<path d="M622.300 291h5.800l3.900 3.900v8.700a1.200 1.200 0 0 1-1.200 1.200h-8.500a1.200 1.200 0 0 1-1.200-1.200v-11.400a1.200 1.200 0 0 1 1.200-1.200z"/>
<path d="M628 291v4h4" fill="none" stroke="#fff" stroke-width=".9"/>
<path d="M626.500 296.800l3 3.200h-2v2.800h-2V300h-2z" fill="#fff"/>
</g>
<!-- row icons -->
<path d="M221.500 361.400H237.700a1.300 1.300 0 0 1 1.300 1.300V374a1.300 1.300 0 0 1-1.300 1.300H229L223.600 380V375.300H221.500a1.300 1.300 0 0 1-1.300-1.300V362.700a1.300 1.300 0 0 1 1.300-1.300z" fill="none" stroke="#111" stroke-width="1.750" stroke-linejoin="round"/>
<path d="M225.300 366.400h8.800M225.300 370.800h8.800" fill="none" stroke="#111" stroke-width="1.750" stroke-linecap="round"/>
<g transform="matrix(-0.7071 0.7071 0.7071 0.7071 211.200 687.600)">
<path d="M11.700 6.250L0 6.250A6.250 6.250 0 0 1 0 -6.250L11.070 -6.250A4.125 4.125 0 0 1 11.070 2L0 2A1.875 1.875 0 0 1 0 -1.750L8 -1.750" fill="none" stroke="#111" stroke-width="1.900" stroke-linecap="round"/>
</g>
<!-- scrollbar arrows -->
<g fill="#8b8b8b" stroke="#8b8b8b" stroke-width="2.400" stroke-linejoin="round">
<polygon points="1893.500,358.800 1899.500,366.600 1887.500,366.600"/>
<polygon points="1893.500,806 1899.500,797.600 1887.500,797.600"/>
</g>
<!-- pagination chevrons -->
<path d="M84 293.3l-5.3 5.2 5.3 5.2" fill="none" stroke="#8a9096" stroke-width="2"/>
<path d="M203.500 293.300l5.300 5.200-5.300 5.200" fill="none" stroke="#26ada9" stroke-width="2"/>
</svg>

<svg class="abs" style="left:0;top:0;pointer-events:none;filter:drop-shadow(0 1px 3.5px rgba(0,0,0,.5))" width="1920" height="823" viewBox="0 0 1920 823">
<rect x="391.65" y="278.95" width="325.7" height="34.4" rx="6" fill="none" stroke="#f92765" stroke-width="3.3"/>
<rect x="63.75" y="433.75" width="36.6" height="74.3" rx="6" fill="none" stroke="#f92765" stroke-width="3.3"/>
</svg>
</body>
</html>
